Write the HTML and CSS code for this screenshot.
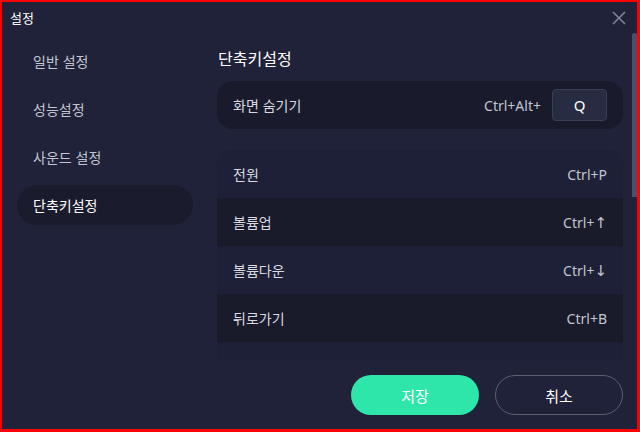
FILE: index.html
```html
<!DOCTYPE html>
<html lang="ko">
<head>
<meta charset="utf-8">
<link rel="stylesheet" href="styles.css">
</head>
<body>
<div class="window">
  <div class="titlebar">
    <span class="title">설정</span>
    <svg class="close" width="14" height="14" viewBox="0 0 14 14"><path d="M1 1 L13 13 M13 1 L1 13" stroke="#80849a" stroke-width="1.6" fill="none"/></svg>
  </div>
  <div class="body">
    <nav class="sidebar">
      <div class="nav-item">일반 설정</div>
      <div class="nav-item">성능설정</div>
      <div class="nav-item">사운드 설정</div>
      <div class="nav-item active">단축키설정</div>
    </nav>
    <div class="main">
      <div class="content">
        <h2 class="heading">단축키설정</h2>
        <div class="card">
          <span class="label">화면 숨기기</span>
          <div class="combo">
            <span class="keys">Ctrl+Alt+</span>
            <span class="keybox">Q</span>
          </div>
        </div>
        <div class="list">
          <div class="row"><span class="label">전원</span><span class="keys">Ctrl+P</span></div>
          <div class="row dark"><span class="label">볼륨업</span><span class="keys">Ctrl+<span class="arrow">↑</span></span></div>
          <div class="row"><span class="label">볼륨다운</span><span class="keys">Ctrl+<span class="arrow">↓</span></span></div>
          <div class="row dark"><span class="label">뒤로가기</span><span class="keys">Ctrl+B</span></div>
          <div class="row filler"></div>
        </div>
      </div>
      <div class="track"><div class="thumb"></div></div>
    </div>
  </div>
  <div class="footer">
    <button class="btn primary">저장</button>
    <button class="btn ghost">취소</button>
  </div>
</div>
</body>
</html>
```

FILE: styles.css
```css
* { box-sizing: border-box; }
html, body { margin: 0; padding: 0; }
body {
  width: 640px;
  height: 432px;
  overflow: hidden;
  font-family: "Noto Sans CJK KR", "Noto Sans", sans-serif;
  background: #1f2239;
}
.window {
  width: 640px;
  height: 432px;
  border-style: solid;
  border-color: #ff0000;
  border-width: 2px 3px 3px 2px;
  background: #1f2239;
  display: flex;
  flex-direction: column;
}
.titlebar {
  height: 31px;
  display: flex;
  align-items: center;
  justify-content: space-between;
  padding: 0 11px 0 8px;
}
.title {
  color: #ffffff;
  font-size: 13px;
  line-height: 18px;
}
.close { display: block; }
.body {
  display: flex;
  height: 327px;
}
.sidebar {
  width: 215px;
  padding: 8px 24px 0 15px;
  display: flex;
  flex-direction: column;
  gap: 8px;
}
.nav-item {
  height: 40px;
  border-radius: 20px;
  padding-left: 16px;
  display: flex;
  align-items: center;
  font-size: 14px;
  color: #c4c6d2;
}
.nav-item.active {
  background: #1a1c2e;
  color: #ffffff;
}
.main {
  display: flex;
  flex: 1;
}
.content {
  width: 406px;
  height: 327px;
  overflow: hidden;
}
.heading {
  margin: 13px 0 0 1px;
  font-size: 16px;
  line-height: 24px;
  font-weight: 400;
  color: #ffffff;
}
.card {
  margin-top: 11px;
  height: 48px;
  border-radius: 16px;
  background: #191b2c;
  display: flex;
  align-items: center;
  justify-content: space-between;
  padding: 0 16px 0 16px;
}
.label {
  font-size: 14px;
  color: #d8dae2;
}
.keys {
  font-family: "Noto Sans", "Noto Sans CJK KR", sans-serif;
  font-size: 14px;
  color: #c3c5cf;
}
.arrow {
  font-family: "DejaVu Sans", sans-serif;
  font-size: 15px;
}
.combo {
  display: flex;
  align-items: center;
  gap: 11px;
}
.keybox {
  width: 55px;
  height: 32px;
  border-radius: 4px;
  background: #282c42;
  border: 1px solid #3a3e56;
  color: #ffffff;
  font-family: "Noto Sans", sans-serif;
  font-size: 15px;
  display: flex;
  align-items: center;
  justify-content: center;
}
.list {
  margin-top: 21px;
  border-radius: 14px 14px 0 0;
  overflow: hidden;
  background: #1d2036;
}
.row {
  height: 48px;
  display: flex;
  align-items: center;
  justify-content: space-between;
  padding: 0 16px;
}
.row.dark { background: #191b2b; }
.track {
  width: 5px;
  margin-left: 9px;
}
.thumb {
  height: 164px;
  background: #4b5068;
  border-radius: 2px 2px 0 0;
}
.footer {
  flex: 1;
  display: flex;
  justify-content: flex-end;
  align-items: flex-start;
  gap: 16px;
  padding: 15px 14px 0 0;
}
.btn {
  width: 128px;
  height: 40px;
  border-radius: 20px;
  font-family: "Noto Sans CJK KR", "Noto Sans", sans-serif;
  font-size: 15px;
  color: #ffffff;
  cursor: pointer;
}
.btn.primary {
  background: #2ee5aa;
  border: none;
}
.btn.ghost {
  background: transparent;
  border: 1px solid #5c5f72;
}
```
